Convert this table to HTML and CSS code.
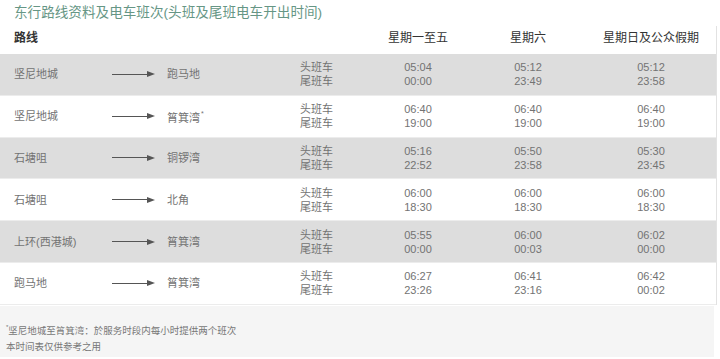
FILE: index.html
```html
<!DOCTYPE html>
<html lang="zh">

<head>
    <meta charset="UTF-8">
    <title>东行路线</title>
    <link rel="stylesheet" href="styles.css">
</head>

<body>
    <section class="main">
        <h2 class="title">东行路线资料及电车班次(头班及尾班电车开出时间)</h2>
        <div class="table">
            <div class="row head">
                <div class="route-head">路线</div>
                <div class="time">星期一至五</div>
                <div class="time">星期六</div>
                <div class="time">星期日及公众假期</div>
            </div>
            <div class="row grey">
                <div>坚尼地城</div>
                <div class="arrow"><span class="shaft"></span><span class="tip"></span></div>
                <div>跑马地</div>
                <div class="label">头班车<br>尾班车</div>
                <div class="time">05:04<br>00:00</div>
                <div class="time">05:12<br>23:49</div>
                <div class="time">05:12<br>23:58</div>
            </div>
            <div class="row">
                <div>坚尼地城</div>
                <div class="arrow"><span class="shaft"></span><span class="tip"></span></div>
                <div>筲箕湾<sup>*</sup></div>
                <div class="label">头班车<br>尾班车</div>
                <div class="time">06:40<br>19:00</div>
                <div class="time">06:40<br>19:00</div>
                <div class="time">06:40<br>19:00</div>
            </div>
            <div class="row grey">
                <div>石塘咀</div>
                <div class="arrow"><span class="shaft"></span><span class="tip"></span></div>
                <div>铜锣湾</div>
                <div class="label">头班车<br>尾班车</div>
                <div class="time">05:16<br>22:52</div>
                <div class="time">05:50<br>23:58</div>
                <div class="time">05:30<br>23:45</div>
            </div>
            <div class="row">
                <div>石塘咀</div>
                <div class="arrow"><span class="shaft"></span><span class="tip"></span></div>
                <div>北角</div>
                <div class="label">头班车<br>尾班车</div>
                <div class="time">06:00<br>18:30</div>
                <div class="time">06:00<br>18:30</div>
                <div class="time">06:00<br>18:30</div>
            </div>
            <div class="row grey">
                <div>上环(西港城)</div>
                <div class="arrow"><span class="shaft"></span><span class="tip"></span></div>
                <div>筲箕湾</div>
                <div class="label">头班车<br>尾班车</div>
                <div class="time">05:55<br>00:00</div>
                <div class="time">06:00<br>00:03</div>
                <div class="time">06:02<br>00:00</div>
            </div>
            <div class="row">
                <div>跑马地</div>
                <div class="arrow"><span class="shaft"></span><span class="tip"></span></div>
                <div>筲箕湾</div>
                <div class="label">头班车<br>尾班车</div>
                <div class="time">06:27<br>23:26</div>
                <div class="time">06:41<br>23:16</div>
                <div class="time">06:42<br>00:02</div>
            </div>
        </div>
        <div class="note">
            <p><sup>*</sup>坚尼地城至筲箕湾：於服务时段内每小时提供两个班次</p>
            <p>本时间表仅供参考之用</p>
        </div>
    </section>
</body>

</html>
```

FILE: styles.css
```css
* {
    margin: 0;
    padding: 0;
    box-sizing: border-box;
}

body {
    background: #fff;
    font-family: "Liberation Sans", "Noto Sans CJK SC", sans-serif;
    color: #666;
}

.main {
    width: 717px;
}

.title {
    height: 26px;
    line-height: 26px;
    padding-left: 14px;
    font-size: 13.6px;
    font-weight: normal;
    color: #669685;
}

.table {
    border-right: 1px solid #e2e2e2;
}

.row {
    display: grid;
    grid-template-columns: 98px 55px 131px 68px 104px 116px 130px;
    align-items: center;
    height: 41.8px;
    padding-left: 14px;
    font-size: 11px;
    line-height: 14px;
    color: #737373;
    border-bottom: 1px solid #ececec;
}

.row.grey {
    background: #dddddd;
}

.row.head {
    height: 28px;
    padding-bottom: 4px;
    font-size: 12px;
    color: #333;
    border-bottom: none;
}

.route-head {
    grid-column: 1 / 5;
    font-weight: bold;
}

.time {
    text-align: center;
}

.label {
    padding-left: 2px;
}

.row sup {
    font-size: 7px;
    vertical-align: 6px;
    margin-left: 1px;
}

.arrow {
    display: flex;
    align-items: center;
    width: 43px;
}

.arrow .shaft {
    display: block;
    flex: 1;
    height: 1px;
    background: #555;
}

.arrow .tip {
    display: block;
    width: 0;
    height: 0;
    border-left: 8px solid #555;
    border-top: 3px solid transparent;
    border-bottom: 3px solid transparent;
}

.note {
    margin-top: 1px;
    width: 714px;
    background: #f5f5f5;
    padding: 13px 0 2px 6px;
    font-size: 9.5px;
    line-height: 16px;
    color: #777;
}

.note sup {
    font-size: 6px;
    vertical-align: 5px;
}
```
